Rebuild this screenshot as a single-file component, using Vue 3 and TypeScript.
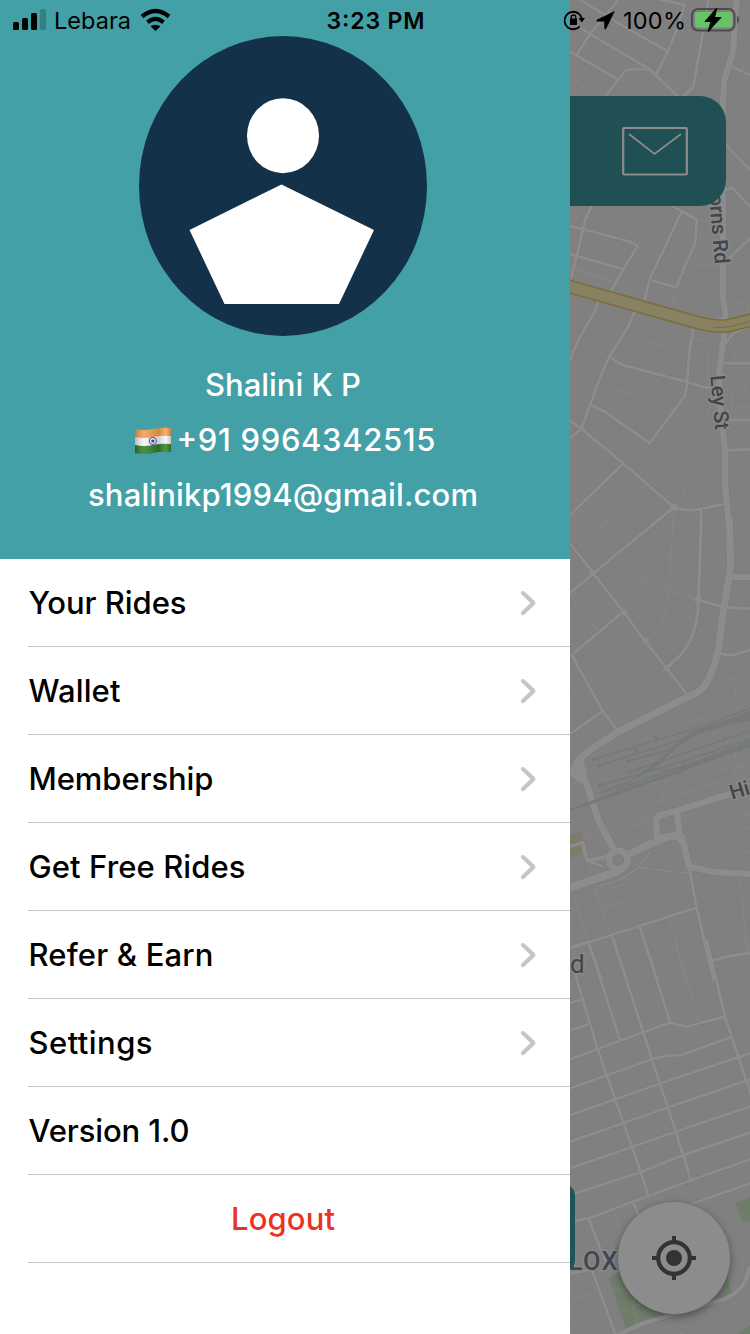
<script setup lang="ts">
interface Road { d: string; w?: number }
interface Tile { x: number; y: number; roads: Road[]; lanes: string[] }

const menu: string[] = ['Your Rides', 'Wallet', 'Membership', 'Get Free Rides', 'Refer & Earn', 'Settings']
const menuWidths: number[] = [158, 92, 185, 217, 185, 124]

// Map geometry is drawn at three units per pixel.
const tiles: Tile[] = [
  {
    x: 0, y: 90,
    roads: [
      { d: 'M0 65 L147 150' }, { d: 'M-5 -32 L60 12 L235 115 L325 200' }, { d: 'M145 -90 L60 12 L20 75' },
      { d: 'M30 -90 L180 0 L290 62' }, { d: 'M235 -100 L345 -75 L320 0 L295 60 L260 132' },
      { d: 'M105 200 L160 130 Q168 118 185 118 L235 118' }, { d: 'M415 -90 L400 0 L370 170 L340 200' },
      { d: 'M500 -90 L493 0 L490 60 L462 155 L459 220 L459 780', w: 19 },
      { d: 'M485 110 L540 135' }, { d: 'M468 345 L540 420' }, { d: 'M460 482 L487 473 L540 530' },
      { d: 'M540 625 L470 692' }, { d: 'M65 528 L45 570 L20 680 L3 745' },
      { d: 'M0 588 L180 635 L203 648 L140 750 L120 790' }, { d: 'M0 672 L160 718' },
      { d: 'M305 528 L380 568 L376 640 L340 720 L320 772 L240 750' }, { d: 'M335 545 L240 745 L222 818' },
    ],
    lanes: [
      'M160 530 L130 590 L122 615', 'M260 530 L205 645 L340 710', 'M355 695 Q400 712 440 702', 'M155 150 L205 200',
      'M0 140 Q30 150 60 200', 'M470 195 L540 217', 'M510 280 L540 310', 'M5 715 L130 755', 'M385 570 L420 580',
      'M498 420 L487 440 L508 457 L490 470', 'M500 530 L510 535 L528 520', 'M0 105 L22 75',
    ],
  },
  {
    x: 0, y: 810,
    roads: [
      { d: 'M160 0 L120 68' }, { d: 'M85 92 Q80 120 50 165 Q20 215 0 270' },
      { d: 'M195 120 Q185 150 165 185 L118 260 L95 310 L35 475 L0 505' },
      { d: 'M118 260 Q150 285 180 292 L350 335 L400 352 L418 352' },
      { d: 'M372 168 L360 230 L350 350 L345 378 L238 520 L110 428 L62 405' },
      { d: 'M0 452 L35 477 L160 580 L312 712 L228 780' }, { d: 'M160 580 L0 735' },
      { d: 'M312 712 Q335 722 375 720 L465 702' }, { d: 'M393 716 L394 780' },
      { d: 'M460 280 L540 280' }, { d: 'M475 450 L540 450' }, { d: 'M472 541 L540 538' },
      { d: 'M459 0 L459 80 L468 150 L462 200 L448 300 L450 400 L465 540 L465 640 L478 780', w: 19 },
      { d: 'M430 158 L468 138' }, { d: 'M466 220 L490 190 L540 168' },
    ],
    lanes: [
      'M0 -8 L50 5 L130 35', 'M0 150 L50 162', 'M190 205 L350 247', 'M90 345 L280 400 L325 432', 'M230 460 L210 487',
      'M90 530 L0 612', 'M0 670 L28 702', 'M225 650 L85 775', 'M352 642 L340 675 L312 712 L309 780', 'M302 445 L322 462',
      'M418 225 L415 280 L408 350', 'M345 485 L415 435 L420 400', 'M370 208 L402 212', 'M540 215 L493 235 V275',
      'M485 350 V440', 'M495 445 V412 H540', 'M525 345 V378 H540', 'M480 118 Q500 85 530 105 Q540 120 525 132 L500 112',
      'M302 115 L318 52 L345 42', 'M280 50 L268 88', 'M305 95 L328 100',
    ],
  },
  {
    x: 0, y: 1560,
    roads: [
      { d: 'M0 70 L70 160 L160 275 L225 363 L290 445 L350 522' }, { d: 'M265 0 L70 160 L0 220' },
      { d: 'M160 275 L5 405 L98 573 L145 635' }, { d: 'M98 573 L0 642' },
      { d: 'M394 0 L385 240 Q385 350 325 412 L290 445', w: 10 }, { d: 'M385 240 L462 262 L540 266' },
      { d: 'M485 170 L540 172', w: 18 }, { d: 'M450 397 Q470 412 500 402 L540 390' },
      { d: 'M478 0 L482 140 L462 260 L445 390 Q425 470 402 500 Q385 518 345 535 L235 590 L145 635 L60 690 Q20 718 10 752', w: 22 },
    ],
    lanes: [
      'M115 0 L22 85', 'M310 0 L303 95 L210 187 L182 255 L160 275', 'M303 95 L298 210 Q285 305 255 340 L225 363',
      'M210 187 L385 238', 'M0 225 L85 333', 'M225 363 L0 530', 'M290 445 L105 568', 'M485 8 H540', 'M485 38 H540',
      'M425 500 L440 530 L405 550 L420 585 L335 613 L315 570', 'M425 478 L470 470 L490 475 L540 462', 'M487 475 L500 535',
      'M360 535 Q375 565 388 540 L385 522',
    ],
  },
  {
    x: 0, y: 2220,
    roads: [
      { d: 'M-5 95 L20 90', w: 24 },
      { d: 'M15 85 Q45 100 65 180 L85 240 L145 355', w: 21 }, { d: 'M-5 445 L110 405 Q150 395 165 375', w: 25 },
      { d: 'M165 348 L250 308 Q300 280 335 293', w: 24 }, { d: 'M328 293 L340 310 L358 380 L430 396 L540 402', w: 20 },
      { d: 'M262 295 L258 240 Q262 228 275 225 L320 212 L480 162', w: 20 }, { d: 'M320 215 L332 300', w: 20 },
      { d: 'M38 308 L52 362 L110 350', w: 12 }, { d: 'M0 320 L38 308' }, { d: 'M52 362 L95 378', w: 8 },
      { d: 'M358 385 L380 503 L430 720' }, { d: 'M380 503 L0 625' }, { d: 'M55 605 L95 720' },
      { d: 'M125 585 L170 720' }, { d: 'M210 562 L262 720' }, { d: 'M420 663 L480 648 L540 640' },
      { d: 'M80 440 L160 415 L205 383 L240 335', w: 4 }, { d: 'M190 360 L205 383 L355 400', w: 4 },
    ],
    lanes: [
      'M0 470 Q12 465 20 490 L52 600', 'M60 370 L70 430 L122 580', 'M97 502 L360 432', 'M82 457 L170 430', 'M295 535 L348 720',
      'M510 410 L532 640', 'M215 245 L208 208 L278 180 L277 158 L422 107', 'M278 180 L470 118 L478 140',
      'M40 300 L120 278 L248 240', 'M30 270 Q50 260 56 292', 'M345 280 L540 220', 'M355 317 L540 262', 'M375 385 L540 333',
      'M450 90 L490 78 L540 230', 'M490 0 L500 85 L540 70',
    ],
  },
  {
    x: 0, y: 2820,
    roads: [
      { d: 'M0 22 L55 5' }, { d: 'M55 5 L150 300' }, { d: 'M130 0 L220 278 L355 690' }, { d: 'M222 0 L300 245' },
      { d: 'M410 0 L465 230 L545 470' }, { d: 'M15 100 L83 328 L210 690' },
      { d: 'M0 358 L150 302 L300 248 L350 260 L465 230' }, { d: 'M0 445 L245 358 Q285 345 335 345 L480 292' },
      { d: 'M0 525 L272 430 L540 340' }, { d: 'M0 605 L295 502 L540 418' }, { d: 'M0 685 L318 575 L540 500' },
      { d: 'M0 190 L35 178' }, { d: 'M0 272 L57 252' },
    ],
    lanes: ['M315 0 L385 243', 'M465 225 L515 213', 'M530 0 L540 40'],
  },
  {
    x: -30, y: 3420,
    roads: [
      { d: 'M30 165 L240 97 L370 45 L570 -22' }, { d: 'M30 245 L85 235 L220 185 L390 122 L570 58' },
      { d: 'M400 190 L570 130' }, { d: 'M210 0 L265 165' }, { d: 'M355 0 L392 120' }, { d: 'M85 235 L145 385' },
      { d: 'M220 185 L240 240' }, { d: 'M30 402 L95 388 L165 580' },
      { d: 'M160 590 L250 550 L500 475 Q560 445 567 385', w: 13 },
    ],
    lanes: [
      'M160 212 L190 310', 'M262 175 L300 180 L300 162', 'M350 140 L368 190', 'M30 482 L115 455', 'M30 560 L135 523',
      'M100 450 L150 435 L160 455 L230 435', 'M225 420 L220 500 L235 560', 'M220 505 L260 480', 'M445 505 L495 582',
      'M510 475 L535 510', 'M310 550 L330 570 L370 582',
    ],
  },
]

const rails: Road[] = [
  { d: 'M0 2430 L140 2380 L320 2316 L540 2234', w: 9 }, { d: 'M70 2278 L360 2190 L540 2125', w: 5 },
  { d: 'M85 2298 L330 2220 L540 2135', w: 5 }, { d: 'M90 2356 L320 2290 L540 2217', w: 5 },
  { d: 'M90 2380 L180 2345 L262 2290 L370 2195 L540 2140', w: 8 }, { d: 'M175 2283 L300 2250 L400 2188 L540 2148', w: 6 },
  { d: 'M170 2317 L270 2285 L540 2192', w: 5 }, { d: 'M262 2292 L345 2210 L540 2155', w: 6 },
  { d: 'M140 2370 L300 2310 L540 2240', w: 6 }, { d: 'M240 2305 L320 2315 L345 2290', w: 5 },
  { d: 'M330 2225 L400 2185 L540 2160', w: 7 }, { d: 'M330 2305 L540 2225', w: 8 },
]
const buffers: number[][] = [[72, 2278], [88, 2298], [175, 2283], [198, 2250], [258, 2212], [90, 2356], [140, 2380], [205, 2308], [262, 2290], [325, 2315], [430, 2256], [466, 2214], [512, 2250]]
</script>

<template>
  <main class="screen">
    <svg class="map" viewBox="0 0 540 4002" aria-hidden="true">
      <rect width="540" height="4002" fill="#808080" />
      <g fill="#6f7d6b">
        <path d="M115 3832 L150 3818 L470 3815 L485 3882 L450 3898 L220 3967 L168 3990Z" />
        <path d="M497 3608 L540 3592 V3662 L517 3666Z M130 3745 L150 3737 V3752Z M505 4002 L540 3977 V4002Z" />
      </g>
      <g fill="#807b68"><path d="M0 2505 L35 2495 L40 2520 L0 2532Z M0 2545 L30 2535 L36 2562 L0 2575Z" /></g>
      <g class="line" stroke="#7b8083" stroke-width="3">
        <path d="M25 920 L185 1025 M35 918 L185 1015 M210 1038 L375 1125 M215 1046 L375 1133 M480 1175 L540 1215 M490 1171 L540 1203" />
      </g>
      <g class="line" stroke="#8a8a8a" stroke-width="2">
        <g v-for="t in tiles" :key="t.y" :transform="`translate(${t.x} ${t.y})`">
          <path v-for="(l, i) in t.lanes" :key="i" :d="l" />
        </g>
      </g>
      <g class="line" stroke="#797979">
        <g v-for="t in tiles" :key="t.y" :transform="`translate(${t.x} ${t.y})`">
          <path v-for="(r, i) in t.roads" :key="i" :d="r.d" :stroke-width="(r.w ?? 9) + 3" />
        </g>
      </g>
      <g class="line" stroke="#8c8c8c">
        <g v-for="t in tiles" :key="t.y" :transform="`translate(${t.x} ${t.y})`">
          <path v-for="(r, i) in t.roads" :key="i" :d="r.d" :stroke-width="r.w ?? 9" />
        </g>
      </g>
      <g fill="#8c8c8c">
        <circle cx="145" cy="2580" r="37" />
        <circle cx="312" cy="1522" r="10" /><circle cx="70" cy="1720" r="9" /><circle cx="162" cy="1837" r="9" />
        <circle cx="226" cy="1923" r="10" /><circle cx="290" cy="2005" r="9" /><circle cx="384" cy="1799" r="10" />
        <path d="M-5 2320 Q20 2300 40 2275 L55 2345 L30 2350Z" />
      </g>
      <circle cx="145" cy="2580" r="16" fill="#808080" stroke="#747474" stroke-width="2" />
      <g class="line" stroke="#76797b"><path v-for="(r, i) in rails" :key="i" :d="r.d" :stroke-width="r.w" /></g>
      <circle v-for="b in buffers" :key="b[0]" :cx="b[0]" :cy="b[1]" r="6" fill="#75787a" />
      <g class="line">
        <path d="M-10 857 L380 967 Q430 980 470 978 L545 960" stroke="#7d6c3b" stroke-width="41" />
        <path d="M-10 857 L380 967 Q430 980 470 978 L545 960" stroke="#898262" stroke-width="32" />
        <path d="M430 982 Q480 987 545 961" stroke="#7d6c3b" stroke-width="3" />
      </g>
      <g class="labels">
        <text transform="translate(412 530) rotate(85)" textLength="264">thorns Rd</text>
        <text transform="translate(421 1127) rotate(85)" textLength="164">Ley St</text>
        <text transform="translate(486 2399) rotate(-17)">Hig</text>
        <text class="place" x="0" y="2918">d</text>
        <text class="town" x="-4" y="3810" letter-spacing="4">LOX</text>
      </g>
    </svg>

    <div class="topcard">
      <svg width="66" height="49" viewBox="0 0 66 49">
        <rect x="1.2" y="1" width="63.6" height="46.5" rx="1" fill="none" stroke="#8c8c8c" stroke-width="2.2" />
        <path d="M7 7 L32.5 27 L59 7" fill="none" stroke="#8c8c8c" stroke-width="1.7" />
      </svg>
    </div>
    <div class="bottomcard"></div>
    <button class="locate" aria-label="My location">
      <svg width="44" height="44" viewBox="0 0 44 44">
        <circle cx="22" cy="22" r="15.8" fill="none" stroke="#333" stroke-width="4.2" />
        <circle cx="22" cy="22" r="8" fill="#333" />
        <path d="M22 0V6 M22 38V44 M0 22H6 M38 22H44" stroke="#333" stroke-width="4" />
      </svg>
    </button>

    <aside class="drawer">
      <header class="profile">
        <svg class="avatar" viewBox="0 0 288 300">
          <ellipse cx="144" cy="150" rx="144" ry="150" fill="#14314a" />
          <ellipse cx="144" cy="99.7" rx="36" ry="37.5" fill="#fff" />
          <path d="M142.5 148.5 L235 194 L200 268 H85.5 L50.5 194Z" fill="#fff" />
        </svg>
        <svg class="line-text" width="570" height="55"><text x="283" y="30" text-anchor="middle" textLength="156">Shalini K P</text></svg>
        <svg class="line-text" width="570" height="55">
          <defs>
            <linearGradient id="fold" x1="0" x2="1">
              <stop offset="0" stop-color="#000" stop-opacity=".25" /><stop offset=".25" stop-color="#fff" stop-opacity=".12" />
              <stop offset=".65" stop-color="#000" stop-opacity=".15" /><stop offset=".85" stop-color="#fff" stop-opacity=".15" />
              <stop offset="1" stop-color="#000" stop-opacity=".2" />
            </linearGradient>
          </defs>
          <g transform="translate(0 -2)">
            <path d="M135 10 Q144 12 153 10 T171 9 V19 Q162 18 153 20 T135 19Z" fill="#f4a052" />
            <path d="M135 18 Q144 20 153 18 T171 17 V26 Q162 25 153 27 T135 26Z" fill="#f5f5f5" />
            <path d="M135 26 Q144 28 153 26 T171 25 V33 Q162 32 153 34 T135 34Z" fill="#31802a" />
            <path d="M135 10 Q144 12 153 10 T171 9 V33 Q162 32 153 34 T135 34Z" fill="url(#fold)" />
            <circle cx="152.8" cy="22" r="3.6" fill="none" stroke="#4d45a5" stroke-width="1" /><circle cx="152.8" cy="22" r="1.6" fill="#4038a0" />
          </g>
          <text x="176.500" y="30" textLength="259">+91 9964342515</text>
        </svg>
        <svg class="line-text" width="570" height="55"><text x="283" y="30" text-anchor="middle" textLength="390">shalinikp1994@gmail.com</text></svg>
      </header>
      <nav>
        <a v-for="(item, i) in menu" :key="item" class="row">
          <svg class="label" width="260" height="87"><text x="0.5" y="55" :textLength="menuWidths[i]">{{ item }}</text></svg>
          <svg width="17" height="26" viewBox="0 0 17 26"><path d="M3 3 L13.5 13 L3 23" fill="none" stroke="#c5c5c7" stroke-width="4" stroke-linecap="round" stroke-linejoin="round" /></svg>
        </a>
        <div class="row"><svg class="label" width="260" height="87"><text x="0.5" y="55" textLength="161">Version 1.0</text></svg></div>
        <a class="row logout"><svg class="label" width="510" height="87"><text x="255" y="55" text-anchor="middle" textLength="104">Logout</text></svg></a>
      </nav>
    </aside>

    <div class="status">
      <svg width="750" height="40" viewBox="0 0 750 40">
        <rect x="13" y="22" width="6" height="8" rx="1.5" /><rect x="22" y="18" width="6" height="12" rx="1.5" />
        <rect x="31" y="13" width="6" height="17" rx="1.5" /><rect x="40" y="9" width="6" height="21" rx="1.5" opacity=".2" />
        <text x="54" y="29" textLength="77">Lebara</text>
        <g fill="none" stroke="#000" stroke-width="4.2">
          <path d="M142 16.5 Q155.500 5.500 169 16.5" /><path d="M147.500 22.300 Q155.500 15.500 163.500 22.300" />
        </g>
        <path d="M150.500 26.300 Q155.500 23 160.500 26.300 L155.500 31Z" />
        <text class="clock" x="326.500" y="29" textLength="98">3:23 PM</text>
        <path d="M577.900 13.200 A8.700 8.700 0 1 0 579.800 26.300" fill="none" stroke="#000" stroke-width="1.9" />
        <path d="M573 11.700 A8.800 8.800 0 0 1 582 19.500" fill="none" stroke="#000" stroke-width="1.9" />
        <path d="M578.500 18 H585 L581.800 22.500Z M570 18.500 H577 V25 H570Z" />
        <path d="M571.200 19 V17.500 A2.300 2.500 0 0 1 575.800 17.500 V19" fill="none" stroke="#000" stroke-width="1.300" />
        <path d="M614.300 11.500 L597 20 Q596 21 597.500 21.200 L604.500 21.200 L604.700 28.600 Q605 30 606 28.500Z" stroke="#000" stroke-width=".6" stroke-linejoin="round" />
        <text x="623" y="29" textLength="63">100%</text>
        <rect x="692" y="9" width="42.500" height="21.500" rx="6" fill="none" stroke="#4c4c4c" stroke-width="2" />
        <path d="M737 15.500 Q741 19.500 737 23.500Z" fill="#4c4c4c" />
        <rect x="695" y="12" width="37" height="15.500" rx="3" fill="#65c466" />
        <path d="M716.800 8 L705 21.500 H711 L708.200 31.500 L721 17.500 H714.500Z" stroke="#000" stroke-width="1" stroke-linejoin="round" />
      </svg>
    </div>
  </main>
</template>

<style>
body { margin: 0; overflow: hidden; }
</style>

<style scoped>
.screen { position: relative; width: 750px; height: 1334px; overflow: hidden; background: #808080; font-family: Inter, "Liberation Sans", sans-serif; }
svg { display: block; flex: none; }
.map { position: absolute; left: 570px; top: 0; width: 180px; height: 1334px; }
.line { fill: none; stroke-linejoin: round; stroke-linecap: round; }
.labels { font-family: Roboto, sans-serif; font-size: 62px; font-weight: 500; fill: #40454a; stroke: #898989; stroke-width: 9px; paint-order: stroke; }
.labels .place { font-size: 78px; font-weight: 400; }
.labels .town { font-size: 76px; fill: #40474f; }
.topcard { position: absolute; left: 540px; top: 96px; width: 186px; height: 110px; border-radius: 26px; background: #205054; display: flex; align-items: center; justify-content: flex-end; padding-right: 38px; box-sizing: border-box; }
.bottomcard { position: absolute; left: 500px; top: 1184px; width: 75px; height: 88px; border-radius: 12px; background: #205458; }
.locate { position: absolute; left: 618px; top: 1202px; width: 112px; height: 112px; padding: 0; border: 0; border-radius: 50%; background: #8c8c8c; display: flex; align-items: center; justify-content: center; box-shadow: 0 3px 8px rgba(0, 0, 0, .4); }
.drawer { position: relative; width: 570px; height: 1334px; background: #fff; }
.profile { box-sizing: border-box; height: 559px; padding-top: 36px; background: #43a0a7; display: flex; flex-direction: column; }
.avatar { width: 288px; height: 300px; margin: 0 0 30px 139px; }
.line-text text { font-size: 31px; font-weight: 450; fill: #fff; }
.row { box-sizing: border-box; height: 88px; margin-left: 28px; padding-right: 33px; border-bottom: 1px solid #c6c6c8; display: flex; align-items: center; justify-content: space-between; }
.label text { font-size: 31px; font-weight: 500; fill: #000; }
.logout { padding-right: 0; }
.logout .label text { fill: #eb3323; font-weight: 450; }
.status { position: absolute; left: 0; top: 0; }
.status text { font-size: 23.5px; }
.status .clock { font-weight: 600; font-size: 23px; }
</style>
